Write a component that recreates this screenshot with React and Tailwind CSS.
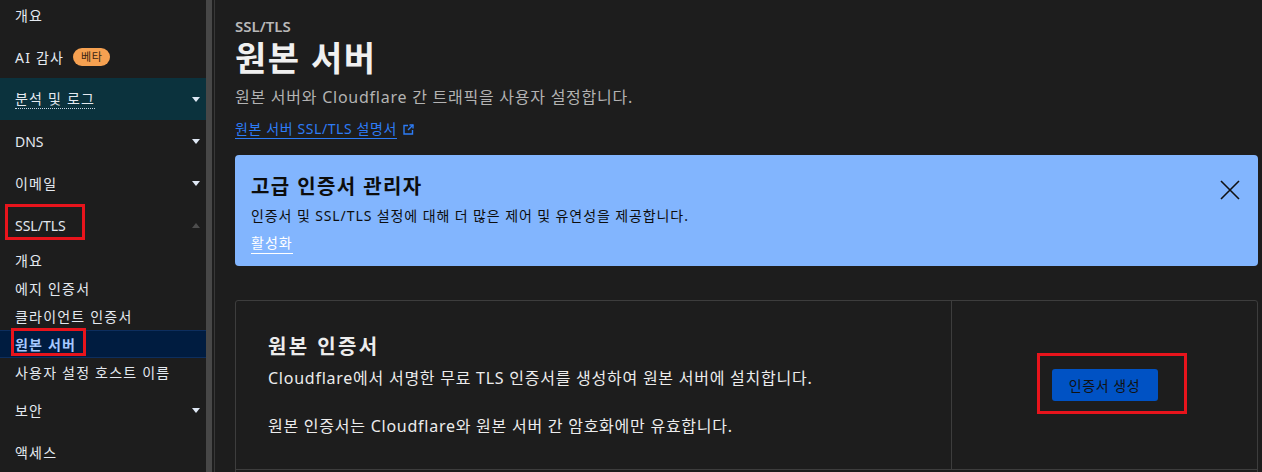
import React from 'react';

const font = { fontFamily: '"Noto Sans", "Noto Sans CJK KR", sans-serif' };

function Caret({ up = false, dim = false }) {
    return (
        <svg width="8" height="5" viewBox="0 0 8 5" className={dim ? 'text-[#4d4d4d]' : 'text-[#dfe8f5]'}>
            <path d={up ? 'M0 5 L4 0 L8 5 Z' : 'M0 0 L8 0 L4 5 Z'} fill="currentColor" />
        </svg>
    );
}

function NavRow({ children, caret, active, up }) {
    return (
        <div className={`h-[42px] flex items-center justify-between pl-[15px] pr-[6px] ${active ? 'bg-[#0b323d]' : ''}`}>
            <div className="flex items-center">{children}</div>
            {caret && <Caret up={up} dim={up} />}
        </div>
    );
}

function SubRow({ children, active }) {
    return (
        <div className={`h-[28px] flex items-center pl-[15px] ${active ? 'bg-[#001c40] border-y border-[#0d2e5e]' : ''}`}>
            {children}
        </div>
    );
}

function Sidebar() {
    return (
        <div className="flex shrink-0 h-full">
            <nav className="w-[206px] text-[14px] tracking-[1.2px] text-[#e4e9f0] -mt-[6px]">
                <NavRow>개요</NavRow>
                <NavRow>
                    <span>AI 감사</span>
                    <span className="ml-[9px] bg-[#f6a151] text-[#3a2410] text-[11px] tracking-[0.5px] leading-[18px] px-[8px] rounded-full">베타</span>
                </NavRow>
                <NavRow caret active>
                    <span className="border-b border-dotted border-[#c9d6e6] leading-[18px]">분석 및 로그</span>
                </NavRow>
                <NavRow caret><span className="tracking-normal">DNS</span></NavRow>
                <NavRow caret>이메일</NavRow>
                <NavRow caret up>
                    <span className="relative tracking-normal">
                        SSL/TLS
                        <span className="absolute -left-[10px] -top-[11px] w-[80px] h-[36px] border-[3px] border-[#e8141c]" />
                    </span>
                </NavRow>
                <div className="pb-[3px]">
                    <SubRow>개요</SubRow>
                    <SubRow>에지 인증서</SubRow>
                    <SubRow>클라이언트 인증서</SubRow>
                    <SubRow active>
                        <span className="relative font-bold text-[#a6c8ff]">
                            원본 서버
                            <span className="absolute -left-[4px] -top-[6px] w-[75px] h-[28px] border-[3px] border-[#e8141c]" />
                        </span>
                    </SubRow>
                    <SubRow>사용자 설정 호스트 이름</SubRow>
                </div>
                <NavRow caret>보안</NavRow>
                <NavRow>액세스</NavRow>
            </nav>
            <div className="w-[6px] bg-[#474747]" />
            <div className="w-[2px]" />
            <div className="w-[1px] bg-[#383838]" />
        </div>
    );
}

export default function App() {
    return (
        <div style={font} className="w-[1262px] h-[472px] flex bg-[#1d1d1d] overflow-hidden">
            <Sidebar />
            <main className="flex-1 pl-[20px] pr-[4px] pt-[17px]">
                <div className="text-[15px] font-semibold text-[#b8b8b8] leading-[18px]">SSL/TLS</div>
                <h1 className="text-[34px] font-bold tracking-[1.5px] text-[#f0f0f0] leading-[44px] mt-[1px]">원본 서버</h1>
                <p className="text-[16px] tracking-[0.75px] text-[#b3b3b3] leading-[24px] mt-[5px]">원본 서버와 Cloudflare 간 트래픽을 사용자 설정합니다.</p>
                <div className="mt-[11px] flex items-center gap-[6px] text-[14px] tracking-[0.6px] text-[#2d7cf6] leading-[18px]">
                    <span className="border-b border-[#2d7cf6]">원본 서버 SSL/TLS 설명서</span>
                    <svg width="11" height="11" viewBox="0 0 11 11" fill="none" stroke="#2d7cf6" strokeWidth="1.4">
                        <path d="M5 1.5 H1 V10 H9.5 V6" />
                        <path d="M6.5 1 H10 V4.5" />
                        <path d="M10 1 L5 6" />
                    </svg>
                </div>

                <div className="mt-[16px] h-[111px] bg-[#82b5fe] rounded-[4px] px-[16px] pt-[17px] flex justify-between text-[#0d0d0d]">
                    <div>
                        <h2 className="text-[20px] font-bold tracking-[1.4px] leading-[30px]">고급 인증서 관리자</h2>
                        <p className="text-[14px] tracking-[0.9px] leading-[20px] mt-[4px]">인증서 및 SSL/TLS 설정에 대해 더 많은 제어 및 유연성을 제공합니다.</p>
                        <a className="inline-block text-[14px] tracking-[1px] text-white leading-[20px] mt-[7px] border-b border-white">활성화</a>
                    </div>
                    <svg width="20" height="20" viewBox="0 0 20 20" className="mt-[8px] mr-[2px]" stroke="#111" strokeWidth="1.6">
                        <path d="M1 1 L19 19 M19 1 L1 19" />
                    </svg>
                </div>

                <div className="mt-[34px] border border-[#3d3d3d] rounded-[3px]">
                    <div className="flex border-b border-[#3d3d3d]">
                        <div className="w-[716px] border-r border-[#3d3d3d] pl-[32px] pt-[31px] pb-[31px] text-[#ececec]">
                            <h3 className="text-[20px] font-bold tracking-[2.4px] leading-[30px]">원본 인증서</h3>
                            <p className="text-[16px] tracking-[0.75px] leading-[24px] mt-[4px]">
                                Cloudflare에서 서명한 무료 TLS 인증서를 생성하여 원본 서버에 설치합니다.
                                <br />
                                <br />
                                원본 인증서는 Cloudflare와 원본 서버 간 암호화에만 유효합니다.
                            </p>
                        </div>
                        <div className="flex-1 flex items-center justify-center">
                            <div className="relative">
                                <button className="w-[106px] h-[32px] bg-[#0052c4] rounded-[3px] text-[14px] tracking-[0.6px] text-[#111]">인증서 생성</button>
                                <span className="absolute -left-[15px] -top-[16px] w-[150px] h-[61px] border-[3px] border-[#e8141c]" />
                            </div>
                        </div>
                    </div>
                    <div className="h-[40px]" />
                </div>
            </main>
        </div>
    );
}
